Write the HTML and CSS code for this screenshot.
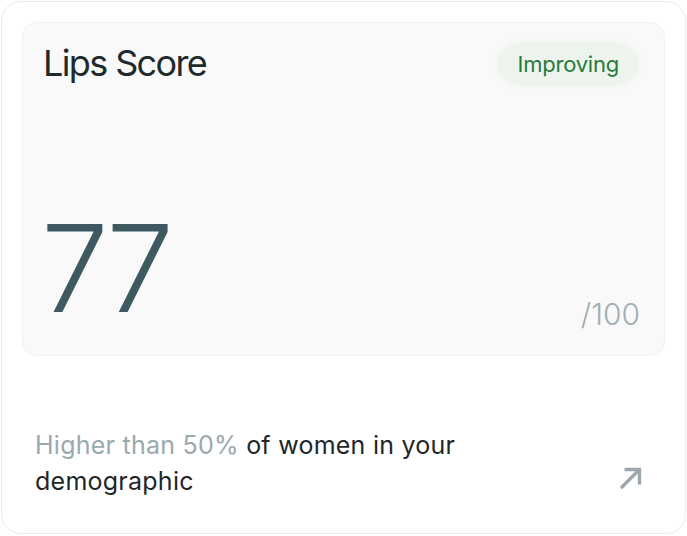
FILE: index.html
```html
<!DOCTYPE html>
<html lang="en">
<head>
    <meta charset="UTF-8">
    <meta name="viewport" content="width=device-width, initial-scale=1.0">
    <title>Lips Score</title>
    <link rel="stylesheet" href="styles.css">
</head>
<body>
    <div class="score-card">
        <div class="score-panel">
            <div class="panel-header">
                <span class="panel-title">Lips Score</span>
                <span class="status-pill">Improving</span>
            </div>
            <div class="score-row">
                <span class="score-value">77</span>
                <span class="score-max">/100</span>
            </div>
        </div>
        <div class="summary">
            <p class="summary-text"><span class="muted">Higher than 50%</span> of women in your demographic</p>
            <svg class="arrow-icon" width="24" height="24" viewBox="0 0 24 24" fill="none">
                <path d="M2 22 L20.5 3.5 M5.5 3.5 H20.5 V18.5" stroke="#9aa8ab" stroke-width="3.4"/>
            </svg>
        </div>
    </div>
</body>
</html>
```

FILE: styles.css
```css
body {
    font-family: Inter, "Liberation Sans", sans-serif;
    background-color: #ffffff;
    margin: 0;
    padding: 1px;
    color: #1f2729;
}

.score-card {
    box-sizing: border-box;
    height: 533px;
    padding: 20px;
    border: 1px solid #ececec;
    border-radius: 20px;
    background: #ffffff;
    display: flex;
    flex-direction: column;
}

.score-panel {
    box-sizing: border-box;
    height: 334px;
    padding: 19px 24px 26px 20px;
    background-color: #f9f9fa;
    border: 1px solid #f1f2f3;
    border-radius: 14px;
    display: flex;
    flex-direction: column;
    justify-content: space-between;
}

.panel-header {
    display: flex;
    align-items: center;
    justify-content: space-between;
}

.panel-title {
    font-size: 36px;
    line-height: 1.2;
    letter-spacing: -0.045em;
    color: #1f2a2d;
}

.status-pill {
    font-size: 22px;
    line-height: 42px;
    letter-spacing: -0.01em;
    padding: 0 19px;
    margin-right: 2px;
    border-radius: 21px;
    color: #267a3a;
    background-color: #edf4ee;
    box-shadow: 0 0 6px 2px #f0f6f1;
}

.score-row {
    display: flex;
    align-items: flex-end;
    justify-content: space-between;
}

.score-value {
    font-size: 121px;
    font-weight: 300;
    line-height: 1;
    letter-spacing: -0.04em;
    color: #3e5a60;
    margin-left: -2px;
}

.score-max {
    font-size: 30px;
    font-weight: 300;
    line-height: 1;
    color: #a3aeb1;
}

/* bottom comparison line */
.summary {
    flex-grow: 1;
    display: flex;
    align-items: flex-end;
    justify-content: space-between;
    padding: 0 22px 14px 13px;
}

.summary-text {
    margin: 0;
    max-width: 460px;
    font-size: 25px;
    line-height: 36px;
    letter-spacing: 0.01em;
}

.muted {
    color: #9aa9ad;
}

.arrow-icon {
    margin-bottom: 9px;
}
```
